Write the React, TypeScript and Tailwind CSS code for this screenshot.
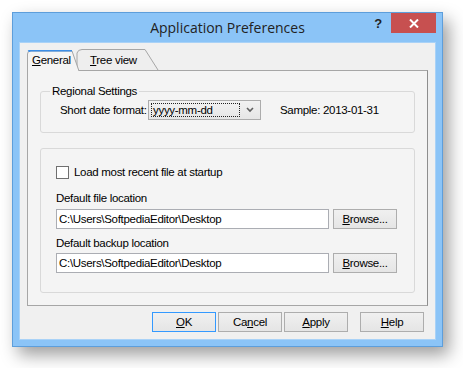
import React from "react";

const U = ({ children }: { children: React.ReactNode }) => <span className="underline underline-offset-[1px]">{children}</span>;

function Btn({ children, focus, w = "w-[64px]" }: { children: React.ReactNode; focus?: boolean; w?: string }) {
  return (
    <div
      className={`${w} h-[20px] flex items-center justify-center border ${focus ? "border-[#3399ff]" : "border-[#adadad]"} bg-gradient-to-b from-[#f0f0f0] to-[#e5e5e5] text-[#000]`}
    >
      {children}
    </div>
  );
}

export default function App() {
  return (
    <div
      className="w-[463px] h-[368px] bg-white pt-[12px] pl-[12px] overflow-hidden text-[11.5px] leading-[13px] tracking-[-0.3px] text-black"
      style={{ fontFamily: '"Liberation Sans", Arial, sans-serif' }}
    >
      <div className="w-[431px] h-[335px] bg-[#8bc4f7] border border-[#5d9edb] flex flex-col shadow-[6px_8px_16px_rgba(0,0,0,0.38)]">
        {/* title bar */}
        <div className="h-[29px] flex-none grid grid-cols-[1fr_auto_1fr]">
          <div />
          <div
            className="pt-[6px] text-[14px] leading-[18px] tracking-normal text-[#222]"
            style={{ fontFamily: '"Open Sans", "Noto Sans", sans-serif' }}
          >
            Application Preferences
          </div>
          <div className="flex justify-end items-start pr-[6px]">
            <div className="mt-[3px] mr-[9px] text-[13px] leading-[15px] font-bold text-[#222]">?</div>
            <div className="w-[45px] h-[20px] bg-[#c75050] flex items-center justify-center">
              <svg width="10" height="9" viewBox="0 0 10 9">
                <path d="M1 0.5 L9 8.5 M9 0.5 L1 8.5" stroke="white" strokeWidth="2" />
              </svg>
            </div>
          </div>
        </div>
        {/* client */}
        <div className="mx-[6px] h-[298px] flex-none bg-[#f0f0f0] border border-[#a9d2f7] flex flex-col pt-[7px] px-[7px]">
          {/* tabs */}
          <div className="h-[20px] flex-none flex relative">
            <div className="relative z-10 w-[53px] h-[21px] flex-none">
              <svg className="absolute left-0 top-0" width="53" height="21" viewBox="0 0 53 21">
                <path d="M0.5 21 V4 Q0.5 1 3.5 1 H45 L52 21" fill="#f4f4f4" stroke="#a6a6a6" />
                <path d="M1.5 1.5 Q2 0.5 4 0.5 H45" stroke="#3d8ee6" strokeWidth="2" fill="none" />
              </svg>
              <div className="absolute left-[5px] top-[4px]">
                <U>G</U>eneral
              </div>
            </div>
            <div className="relative w-[84px] h-[20px] flex-none -ml-[5px] -mt-[1px]">
              <svg className="absolute left-0 top-0" width="84" height="21" viewBox="0 0 84 21">
                <path d="M2 21 V4 Q3 0.5 7 0.5 H70 L83 21" fill="#eeeeee" stroke="#a6a6a6" />
              </svg>
              <div className="absolute left-[15px] top-[5px]">
                <U>T</U>ree view
              </div>
            </div>
          </div>
          {/* pane */}
          <div className="h-[236px] flex-none bg-[#f4f4f4] border border-[#a6a6a6] border-r-[#8e8e8e] flex flex-col px-[12px] pt-[14px]">
            <fieldset className="border border-[#d9d9d9] rounded-[3px] h-[48px] px-0 flex-none">
              <legend className="ml-[9px] px-[2px]">Regional Settings</legend>
              <div className="flex items-center mt-[2px] pl-[19px]">
                <div className="w-[88px]">Short date format:</div>
                <div className="w-[113px] h-[20px] border border-[#acacac] bg-gradient-to-b from-[#f2f2f2] to-[#e6e6e6] flex items-center">
                  <div className="ml-[2px] w-[89px] h-[14px] border border-dotted border-[#222] flex items-center pl-[1px]">
                    yyyy-mm-dd
                  </div>
                  <div className="flex-1 flex justify-center">
                    <svg width="8" height="6" viewBox="0 0 8 6">
                      <path d="M1 1 L4 4 L7 1" stroke="#606060" strokeWidth="1.6" fill="none" />
                    </svg>
                  </div>
                </div>
                <div className="ml-[19px]">Sample: 2013-01-31</div>
              </div>
            </fieldset>
            <div className="mt-[15px] h-[145px] flex-none border border-[#d9d9d9] rounded-[3px] flex flex-col px-[15px] pt-[17px]">
              <div className="flex items-center h-[13px]">
                <div className="w-[13px] h-[13px] border border-[#707070] bg-white" />
                <div className="ml-[5px]">Load most recent file at startup</div>
              </div>
              <div className="mt-[13px] h-[14px]">Default file location</div>
              <div className="mt-[3px] flex items-center">
                <div className="w-[273px] h-[20px] bg-white border border-[#abadb3] flex items-center pl-[2px]">
                  C:\Users\SoftpediaEditor\Desktop
                </div>
                <div className="ml-[4px]">
                  <Btn>
                    <U>B</U>rowse...
                  </Btn>
                </div>
              </div>
              <div className="mt-[8px] h-[14px]">Default backup location</div>
              <div className="mt-[2px] flex items-center">
                <div className="w-[273px] h-[20px] bg-white border border-[#abadb3] flex items-center pl-[2px]">
                  C:\Users\SoftpediaEditor\Desktop
                </div>
                <div className="ml-[4px]">
                  <Btn>
                    <U>B</U>rowse...
                  </Btn>
                </div>
              </div>
            </div>
          </div>
          {/* buttons */}
          <div className="mt-[6px] flex justify-end pr-[4px]">
            <Btn focus>
              <U>O</U>K
            </Btn>
            <div className="ml-[2px]">
              <Btn>
                Ca<U>n</U>cel
              </Btn>
            </div>
            <div className="ml-[2px]">
              <Btn>
                <U>A</U>pply
              </Btn>
            </div>
            <div className="ml-[12px]">
              <Btn>
                <U>H</U>elp
              </Btn>
            </div>
          </div>
        </div>
      </div>
    </div>
  );
}
